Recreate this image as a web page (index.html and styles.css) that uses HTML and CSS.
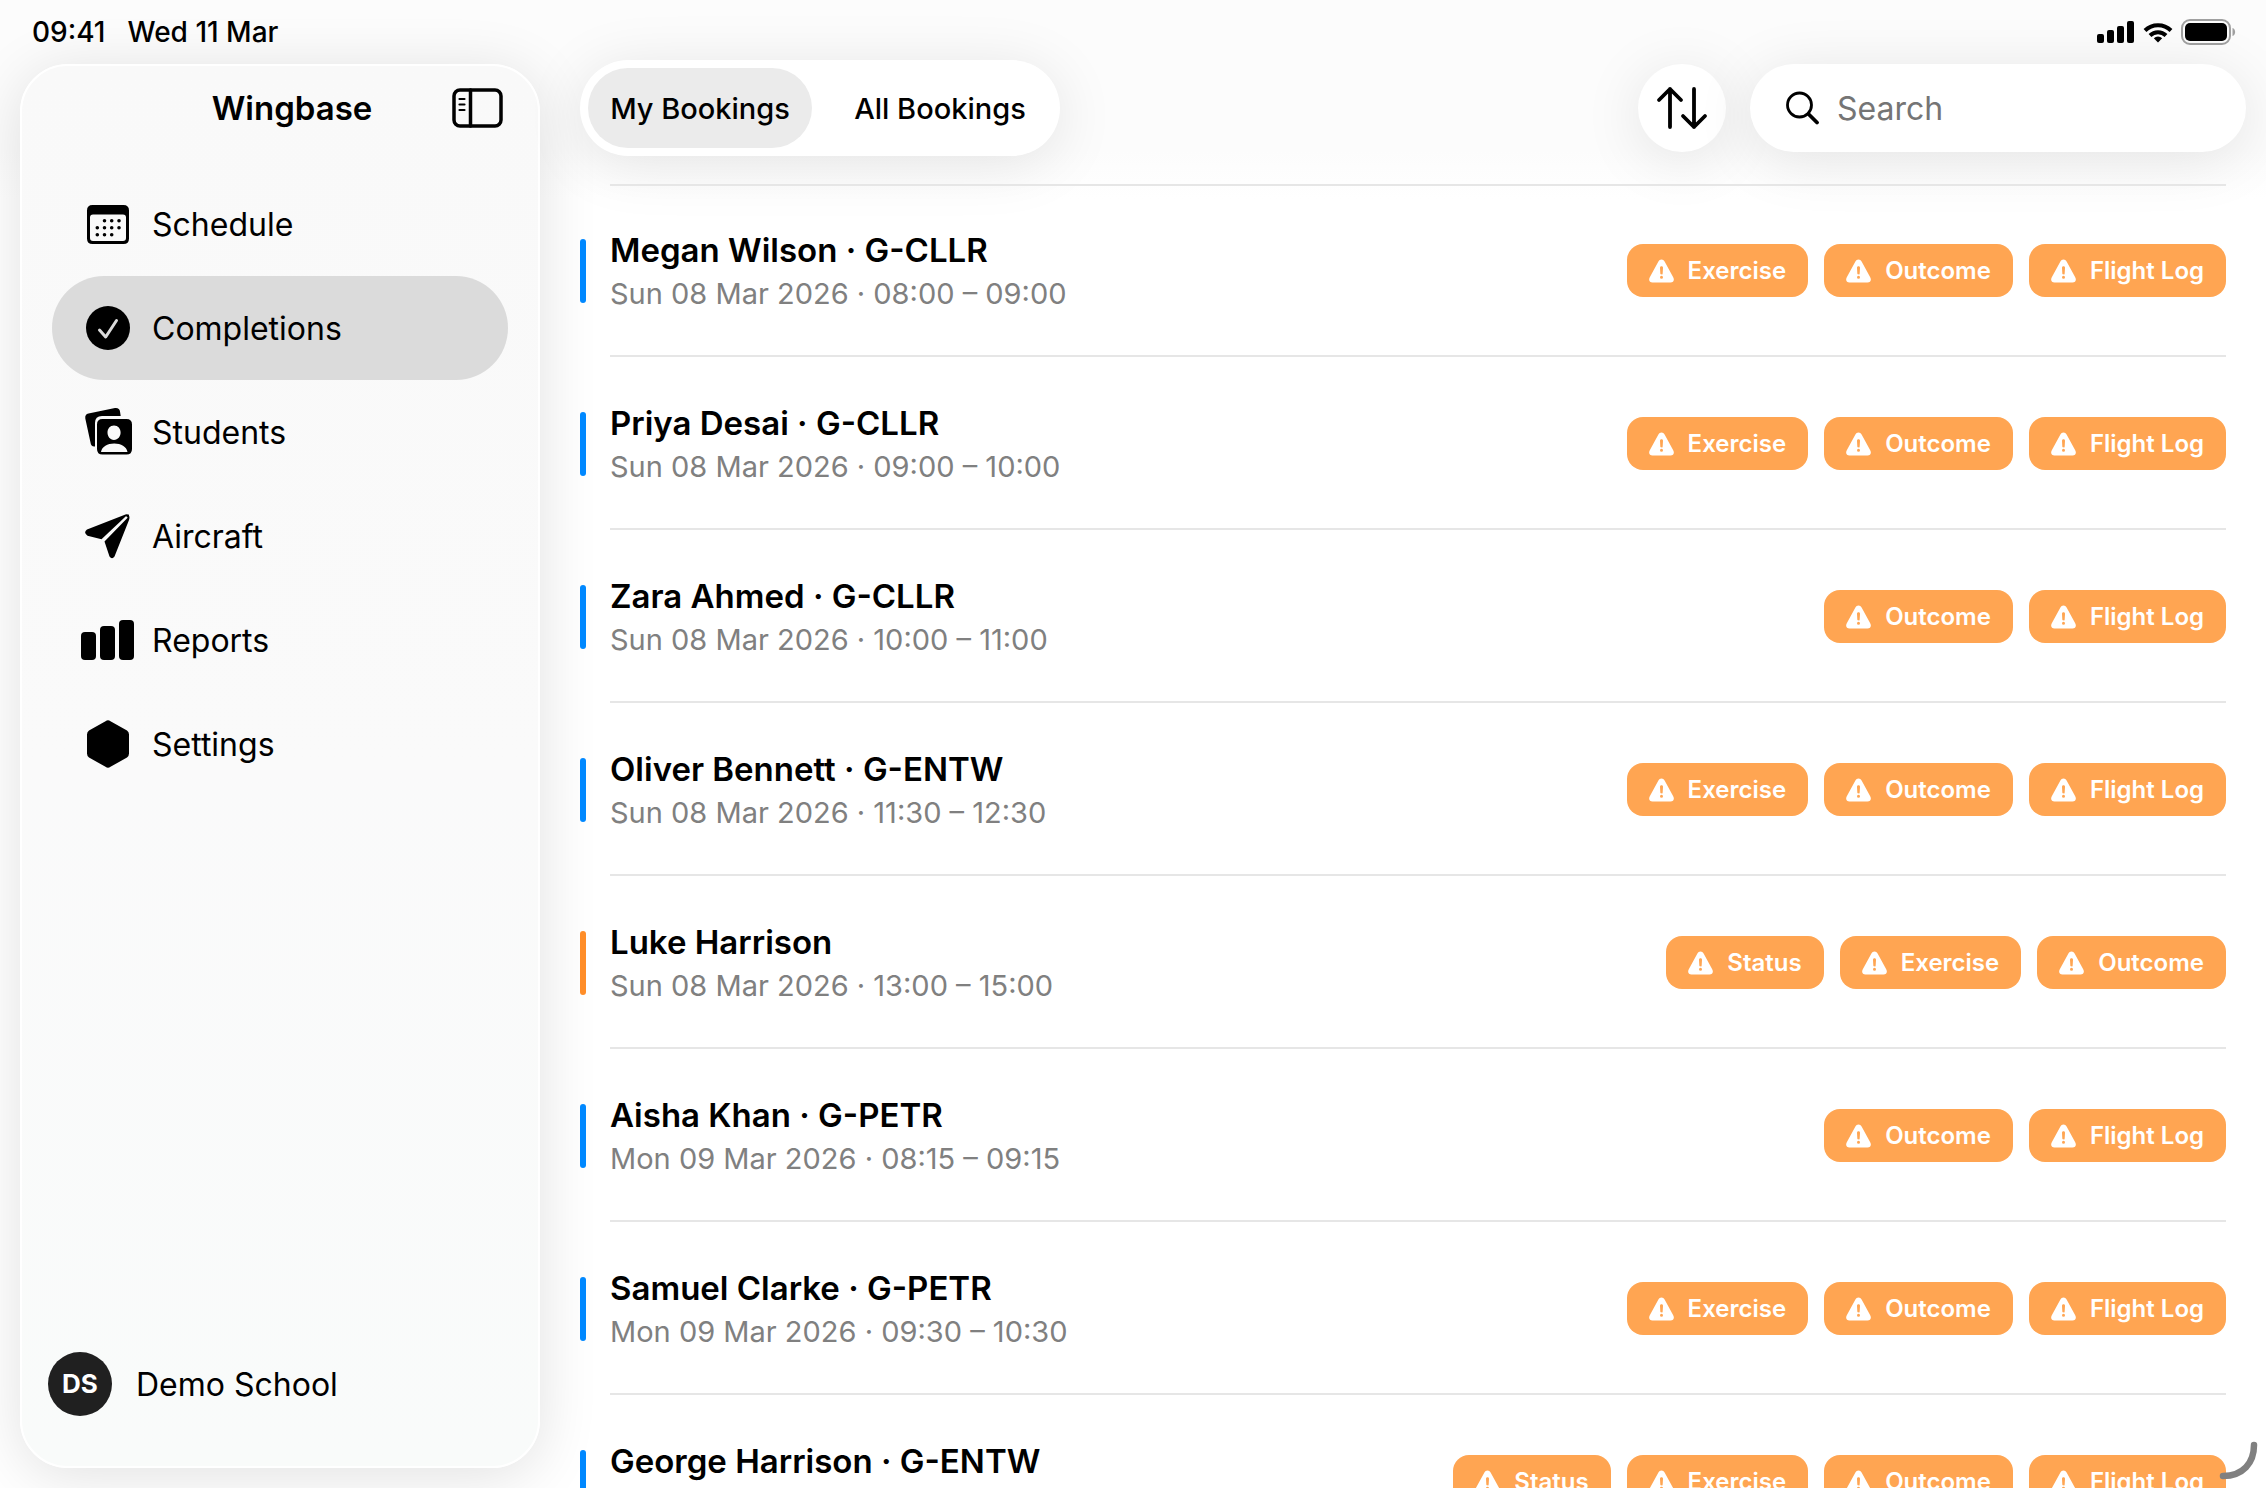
FILE: index.html
```html
<!DOCTYPE html>
<html lang="en">

<head>
    <meta charset="UTF-8">
    <meta name="viewport" content="width=device-width, initial-scale=1.0">
    <title>Wingbase</title>
    <link rel="stylesheet" href="styles.css">
</head>

<body>
    <!-- icons used more than once -->
    <svg class="defs" aria-hidden="true">
        <symbol id="warn" viewBox="0 0 25 24">
            <path fill="#fff" fill-rule="evenodd" d="M12.500 0.500C13.900 0.500 14.900 1.200 15.600 2.500L24.200 18.200C25.700 21 24.500 23.500 21.500 23.500H3.500C0.500 23.500 -0.700 21 0.800 18.200L9.400 2.500C10.100 1.200 11.100 0.500 12.500 0.500ZM12.500 7.200C11.500 7.200 11 7.900 11 8.700L11.300 14.200C11.300 15 11.800 15.400 12.500 15.400S13.700 15 13.700 14.200L14 8.700C14 7.900 13.500 7.200 12.500 7.200ZM12.500 16.800A1.500 1.500 0 1 0 12.500 19.800A1.500 1.500 0 1 0 12.500 16.800Z" />
        </symbol>
    </svg>

    <header class="status">
        <span>09:41</span>
        <span>Wed 11 Mar</span>
        <div class="status-icons">
            <svg width="38" height="22" viewBox="0 0 38 22">
                <rect x="0" y="13" width="7" height="9" rx="2" />
                <rect x="10" y="9" width="7" height="13" rx="2" />
                <rect x="20" y="5" width="7" height="17" rx="2" />
                <rect x="30" y="0" width="7" height="22" rx="2" />
            </svg>
            <svg width="30" height="21" viewBox="0 0 30 21">
                <g fill="none" stroke="#000" stroke-width="4">
                    <path d="M2 8.500A18.500 18.500 0 0 1 28 8.500" />
                    <path d="M7 13.500A11.500 11.500 0 0 1 23 13.500" />
                </g>
                <path d="M15 20.500L10.800 16.300A6 6 0 0 1 19.200 16.300Z" />
            </svg>
            <svg width="55" height="26" viewBox="0 0 55 26">
                <rect x="1" y="1" width="48" height="24" rx="8" fill="none" stroke="#a0a0a0" stroke-width="2" />
                <rect x="4" y="4" width="42" height="18" rx="5" />
                <path d="M51.500 9C55 10 55 16 51.500 17Z" fill="#a0a0a0" />
            </svg>
        </div>
    </header>

    <div class="app">
        <aside class="sidebar">
            <div class="sidebar-head">
                <h1>Wingbase</h1>
                <button class="toggle" type="button" aria-label="Toggle sidebar">
                    <svg width="52" height="40" viewBox="0 0 52 40" fill="none" stroke="#000" stroke-linecap="round">
                        <rect x="2" y="2" width="47" height="36" rx="6" stroke-width="3.500" />
                        <path d="M18.500 2V38" stroke-width="3.500" />
                        <path d="M7.500 11H12.500M7.500 16.500H12.500M7.500 22H12.500" stroke-width="2.200" />
                    </svg>
                </button>
            </div>
            <nav>
                <a href="#">
                    <svg width="54" height="52" viewBox="0 0 54 52">
                        <path fill-rule="evenodd" d="M11.500 7H42.500Q48 7 48 12.500V40.500Q48 46 42.500 46H11.500Q6 46 6 40.500V12.500Q6 7 11.500 7ZM12 16.500Q9 16.500 9 19.500V40Q9 43 12 43H42Q45 43 45 40V19.500Q45 16.500 42 16.500Z" />
                        <path fill="none" stroke="#000" stroke-width="3.600" stroke-linecap="round" d="M23.500 22.700H23.510M30.700 22.700H30.710M38 22.700H38.010M16.300 29.700H16.310M23.500 29.700H23.510M30.700 29.700H30.710M38 29.700H38.010M16.300 36.700H16.310M23.500 36.700H23.510M30.700 36.700H30.710" />
                    </svg>
                    Schedule
                </a>
                <a class="current" href="#">
                    <svg width="54" height="52" viewBox="0 0 54 52">
                        <circle cx="27" cy="26" r="22" />
                        <path d="M18.500 28L24.700 35L35.500 18.500" fill="none" stroke="#dbdbdb" stroke-width="3" stroke-linecap="round" stroke-linejoin="round" />
                    </svg>
                    Completions
                </a>
                <a href="#">
                    <svg width="54" height="52" viewBox="0 0 54 52">
                        <path d="M7.500 7.500L34 2Q38.500 1.500 39 5.500L39.700 10H21Q14 10 14 17V40.500Q10 41 9.500 36.500L4.300 12.500Q3.700 8.300 7.500 7.500Z" />
                        <path fill-rule="evenodd" d="M21.500 13H45.500Q51 13 51 18.500V43Q51 48.500 45.500 48.500H21.500Q16 48.500 16 43V18.500Q16 13 21.500 13ZM33 19.500C29 19.500 26.500 22.800 26.500 26.500S29 34 33 34S39.600 30.200 39.600 26.500S37 19.500 33 19.500ZM20 46H46.500C45.500 40.500 40 37.500 33.200 37.500S21 40.500 20 46Z" />
                    </svg>
                    Students
                </a>
                <a href="#">
                    <svg width="54" height="52" viewBox="0 0 54 52">
                        <path d="M20.500 29.300L6.500 25.700Q2 22.500 6 19.500L44.500 4.500Q46 4 47 4.300Z" />
                        <path d="M23.500 31.500L48.300 6Q48.800 8 48 10L33.500 46.500Q31 50 28.500 46.500Z" />
                        <path d="M44 5L48 4.500L48 9Z" />
                    </svg>
                    Aircraft
                </a>
                <a href="#">
                    <svg width="54" height="52" viewBox="0 0 54 52">
                        <rect x="0" y="18" width="15" height="28" rx="4" />
                        <rect x="19" y="12" width="15" height="34" rx="4" />
                        <rect x="38" y="6" width="15" height="40" rx="4" />
                    </svg>
                    Reports
                </a>
                <a href="#">
                    <svg width="54" height="52" viewBox="0 0 54 52">
                        <path d="M24.500 3.200Q27 1.500 29.500 3.200L46 12.500Q48 13.800 48 16.500V35.500Q48 38 46 39.500L29.500 48.800Q27 50.500 24.500 48.800L8 39.500Q6 38 6 35.500V16.500Q6 13.800 8 12.500Z" />
                    </svg>
                    Settings
                </a>
            </nav>
            <a class="account" href="#">
                <span class="avatar">DS</span>
                Demo School
            </a>
        </aside>

        <main>
            <div class="toolbar">
                <div class="tabs">
                    <button class="selected" type="button">My Bookings</button>
                    <button type="button">All Bookings</button>
                </div>
                <button class="sort" type="button" aria-label="Sort">
                    <svg width="52" height="44" viewBox="0 0 52 44" fill="none" stroke="#000" stroke-width="3.800" stroke-linecap="round" stroke-linejoin="round">
                        <path d="M14 41V3M3 14L14 3L25 14" />
                        <path d="M38 3V41M27 30L38 41L49 30" />
                    </svg>
                </button>
                <label class="search">
                    <svg width="34" height="34" viewBox="0 0 34 34" fill="none" stroke="#000" stroke-linecap="round">
                        <circle cx="13.500" cy="14" r="12" stroke-width="2.800" />
                        <path d="M22.500 23L31 31.500" stroke-width="3.800" />
                    </svg>
                    <input type="search" placeholder="Search" aria-label="Search">
                </label>
            </div>

            <ul class="bookings" id="bookings"></ul>
        </main>
    </div>

    <svg class="corner" width="40" height="40" viewBox="0 0 40 40" aria-hidden="true">
        <path d="M35 4C35 22 24 35 4 35" fill="none" stroke="#808080" stroke-width="6.500" stroke-linecap="round" />
    </svg>

    <script>
        var bookings = [
            ['Megan Wilson · G-CLLR', 'Sun 08 Mar 2026 · 08:00 – 09:00', ['Exercise', 'Outcome', 'Flight Log']],
            ['Priya Desai · G-CLLR', 'Sun 08 Mar 2026 · 09:00 – 10:00', ['Exercise', 'Outcome', 'Flight Log']],
            ['Zara Ahmed · G-CLLR', 'Sun 08 Mar 2026 · 10:00 – 11:00', ['Outcome', 'Flight Log']],
            ['Oliver Bennett · G-ENTW', 'Sun 08 Mar 2026 · 11:30 – 12:30', ['Exercise', 'Outcome', 'Flight Log']],
            ['Luke Harrison', 'Sun 08 Mar 2026 · 13:00 – 15:00', ['Status', 'Exercise', 'Outcome'], 'ground'],
            ['Aisha Khan · G-PETR', 'Mon 09 Mar 2026 · 08:15 – 09:15', ['Outcome', 'Flight Log']],
            ['Samuel Clarke · G-PETR', 'Mon 09 Mar 2026 · 09:30 – 10:30', ['Exercise', 'Outcome', 'Flight Log']],
            ['George Harrison · G-ENTW', '', ['Status', 'Exercise', 'Outcome', 'Flight Log']]
        ];

        var html = '';
        for (var i = 0; i < bookings.length; i++) {
            var b = bookings[i];
            html += '<li class="booking ' + (b[3] || '') + '"><div class="row">';
            html += '<div class="info"><h2>' + b[0] + '</h2><p>' + b[1] + '</p></div>';
            for (var j = 0; j < b[2].length; j++) {
                html += '<span class="tag"><svg width="25" height="24"><use href="#warn"/></svg>' + b[2][j] + '</span>';
            }
            html += '</div></li>';
        }
        document.getElementById('bookings').innerHTML = html;
    </script>
</body>

</html>
```

FILE: styles.css
```css
* {
    margin: 0;
    padding: 0;
    box-sizing: border-box;
}

body {
    height: 100vh;
    display: flex;
    flex-direction: column;
    overflow: hidden;
    font-family: Inter, "Liberation Sans", sans-serif;
    font-size: 32px;
    color: #000;
    background: linear-gradient(#fcfcfc, #fcfcfc 150px, #fff 200px);
}

a {
    color: inherit;
    text-decoration: none;
}

button {
    border: 0;
    background: none;
    font: inherit;
    color: inherit;
    cursor: pointer;
}

svg {
    flex: none;
    display: block;
}

.defs {
    position: absolute;
    width: 0;
    height: 0;
}

/* status bar */
.status {
    flex: none;
    display: flex;
    align-items: center;
    gap: 22px;
    height: 64px;
    padding: 0 30px 0 32px;
    font-size: 28px;
    font-weight: 500;
}

.status-icons {
    display: flex;
    align-items: center;
    gap: 8px;
    margin-left: auto;
}

.app {
    flex: 1;
    min-height: 0;
    display: flex;
}

/* sidebar */
.sidebar {
    flex: none;
    display: flex;
    flex-direction: column;
    width: 520px;
    margin: 0 40px 20px 20px;
    padding: 0 30px;
    border: 2px solid #fff;
    border-radius: 48px;
    background: linear-gradient(#f9f9f9, #fafafa 50%, #f9fbfa);
    box-shadow: 0 8px 60px rgba(0, 0, 0, 0.12);
}

.sidebar-head {
    display: grid;
    grid-template-columns: 1fr auto 1fr;
    align-items: center;
    height: 84px;
    margin-bottom: 22px;
    padding-left: 24px;
}

.sidebar-head h1 {
    grid-column: 2;
    font-size: 33px;
    font-weight: 600;
}

.toggle {
    justify-self: end;
    margin-right: 4px;
}

nav a {
    display: flex;
    align-items: center;
    gap: 17px;
    height: 104px;
    padding-left: 29px;
    border-radius: 52px;
}

nav .current {
    background: #dbdbdb;
}

.account {
    display: flex;
    align-items: center;
    gap: 24px;
    margin: auto -4px 50px;
}

.avatar {
    width: 64px;
    height: 64px;
    border-radius: 50%;
    background: #202020;
    color: #fff;
    font-size: 26px;
    font-weight: 700;
    line-height: 64px;
    text-align: center;
}

/* bookings */
main {
    flex: 1;
    min-width: 0;
    padding-right: 20px;
}

.toolbar {
    display: flex;
    align-items: center;
    gap: 24px;
    height: 88px;
    margin-bottom: 32px;
}

.tabs {
    display: flex;
    gap: 16px;
    margin-right: auto;
    padding: 8px;
    border-radius: 48px;
    background: #fff;
    box-shadow: 0 8px 60px rgba(0, 0, 0, 0.1);
}

.tabs button {
    width: 224px;
    height: 80px;
    border-radius: 40px;
    font-size: 29px;
    font-weight: 500;
}

.tabs .selected {
    background: #ebebeb;
}

.sort,
.search {
    display: flex;
    align-items: center;
    height: 88px;
    border-radius: 44px;
    background: #fff;
    box-shadow: 0 8px 60px rgba(0, 0, 0, 0.1);
}

.sort {
    justify-content: center;
    width: 88px;
}

.search {
    gap: 17px;
    width: 496px;
    padding: 0 36px;
}

.search input {
    flex: 1;
    min-width: 0;
    border: 0;
    outline: 0;
    background: none;
    font: inherit;
}

.search input::placeholder {
    color: #757575;
}

.bookings {
    list-style: none;
}

.booking {
    display: flex;
    align-items: center;
    gap: 24px;
    height: 173px;
    padding-right: 20px;
}

.booking::before {
    content: '';
    width: 6px;
    height: 64px;
    border-radius: 3px;
    background: #0088ff;
}

.booking.ground::before {
    background: #ff8d28;
}

.row {
    flex: 1;
    display: flex;
    align-items: center;
    gap: 16px;
    height: 173px;
    padding-top: 2px;
    border-bottom: 2px solid #e6e6e6;
}

.booking:first-child .row {
    padding-top: 0;
    border-top: 2px solid #e6e6e6;
}

.info {
    flex: 1;
    padding-top: 2px;
}

.info h2 {
    font-size: 33px;
    font-weight: 600;
    line-height: 44px;
}

.info p {
    min-height: 44px;
    font-size: 29px;
    line-height: 44px;
    color: #808080;
}

.tag {
    display: flex;
    align-items: center;
    gap: 14px;
    height: 53px;
    padding: 0 22px;
    border-radius: 16px;
    background: #ffa552;
    color: #fff;
    font-size: 24px;
    font-weight: 600;
}

.corner {
    position: absolute;
    right: 7px;
    bottom: 7px;
}
```
